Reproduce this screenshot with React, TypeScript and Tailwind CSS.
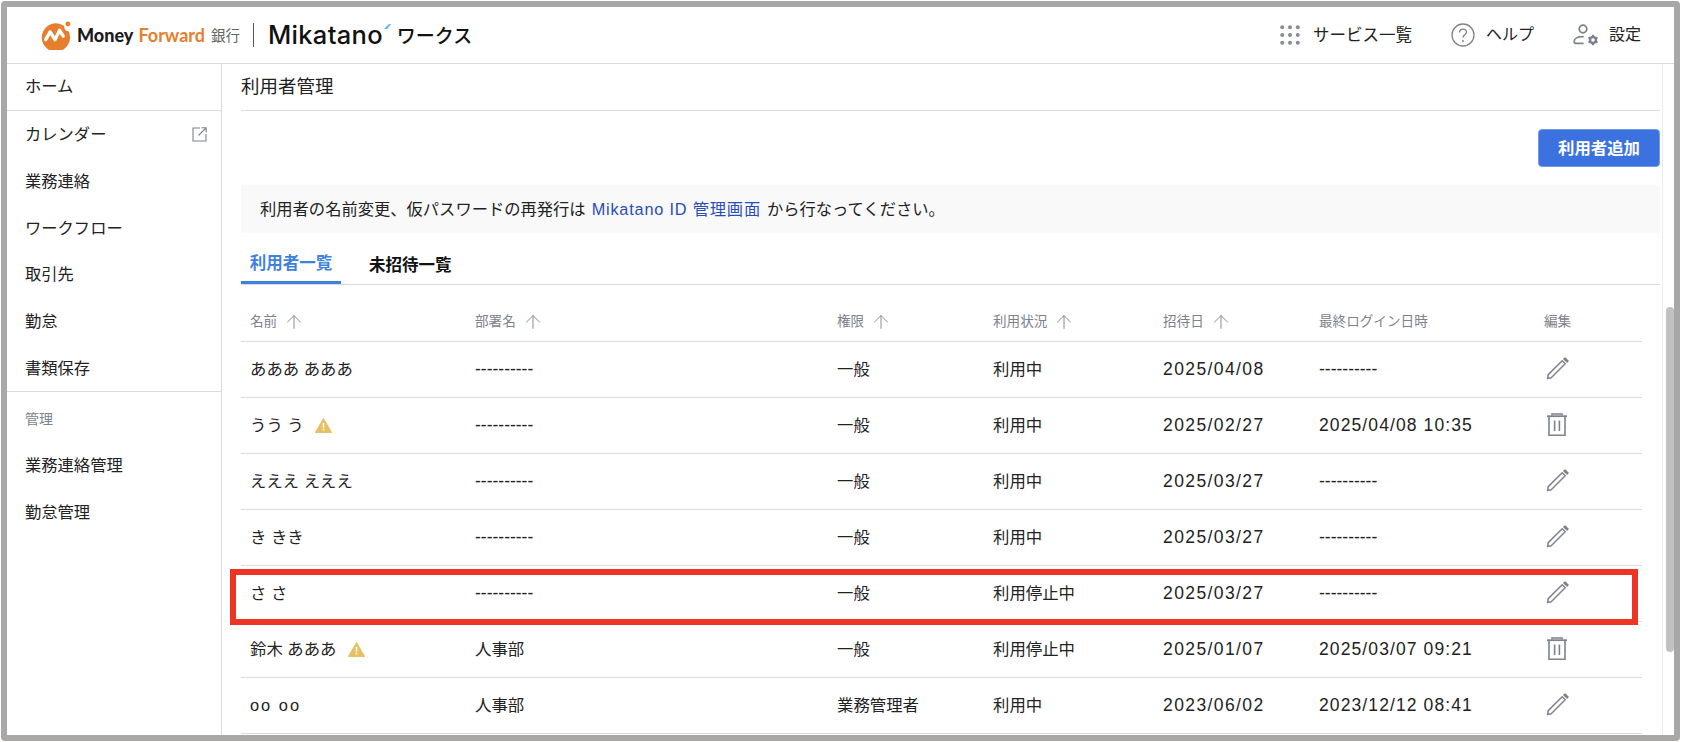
import React from "react";
import { ArrowUp } from "lucide-react";

const jp = "font-['Liberation_Sans','Noto_Sans_CJK_JP',sans-serif]";

const menu = ["カレンダー", "業務連絡", "ワークフロー", "取引先", "勤怠", "書類保存"];
const adminMenu = ["業務連絡管理", "勤怠管理"];

const columns = [
  { label: "名前", sort: true },
  { label: "部署名", sort: true },
  { label: "権限", sort: true },
  { label: "利用状況", sort: true },
  { label: "招待日", sort: true },
  { label: "最終ログイン日時", sort: false },
  { label: "編集", sort: false },
];

const none = "----------";

const users = [
  { name: "あああ あああ", warn: false, dept: none, role: "一般", status: "利用中", invited: "2025/04/08", login: none, trash: false },
  { name: "うう う", warn: true, dept: none, role: "一般", status: "利用中", invited: "2025/02/27", login: "2025/04/08 10:35", trash: true },
  { name: "えええ えええ", warn: false, dept: none, role: "一般", status: "利用中", invited: "2025/03/27", login: none, trash: false },
  { name: "き きき", warn: false, dept: none, role: "一般", status: "利用中", invited: "2025/03/27", login: none, trash: false },
  { name: "さ さ", warn: false, dept: none, role: "一般", status: "利用停止中", invited: "2025/03/27", login: none, trash: false },
  { name: "鈴木 あああ", warn: true, dept: "人事部", role: "一般", status: "利用停止中", invited: "2025/01/07", login: "2025/03/07 09:21", trash: true },
  { name: "oo oo", warn: false, dept: "人事部", role: "業務管理者", status: "利用中", invited: "2023/06/02", login: "2023/12/12 08:41", trash: false },
];

const PencilIcon = () => (
  <svg width="24" height="24" viewBox="0 0 24 24" fill="none" stroke="#7d828b" strokeWidth="1.5" strokeLinejoin="round">
    <path d="M3.200 17.600 17.200 3.800l3 3L6.200 20.700l-3.600.8z" />
    <path d="M19 1.900l1-.9 3 3-1 1z" fill="#7d828b" />
  </svg>
);

const TrashIcon = () => (
  <svg width="22" height="24" viewBox="0 0 22 24" fill="none" stroke="#7d828b" strokeWidth="1.6" className="ml-px">
    <path d="M1 3.200h20" strokeWidth="1.800" />
    <path d="M6 2.200V1h10v1.200" />
    <path d="M3 3.200V22.200h16V3.200" />
    <path d="M8.600 7.500v10.500M13.400 7.500v10.500" />
  </svg>
);

const WarnIcon = () => (
  <svg width="17" height="15" viewBox="0 0 17 15">
    <path d="M8.500.6 16.700 14.600H.3z" fill="#e8c064" stroke="#e8c064" strokeLinejoin="round" />
    <rect x="7.700" y="5" width="1.600" height="4.600" fill="#fff" />
    <rect x="7.700" y="10.800" width="1.600" height="1.600" fill="#fff" />
  </svg>
);

const DotsIcon = () => (
  <svg width="20" height="20" viewBox="0 0 20 20" fill="#868b94">
    {[2.2, 10, 17.8].map((cy) =>
      [2.2, 10, 17.8].map((cx) => <circle key={`${cx}-${cy}`} cx={cx} cy={cy} r="2" />)
    )}
  </svg>
);

const HelpIcon = () => (
  <svg width="24" height="24" viewBox="0 0 24 24" fill="none" stroke="#7d828b">
    <circle cx="12" cy="12" r="11" strokeWidth="1.300" />
    <path d="M8.600 9.400c0-2 1.500-3.200 3.400-3.200s3.400 1.200 3.400 3c0 2.600-3.400 2.600-3.400 5.400" strokeWidth="1.300" />
    <circle cx="12" cy="18" r="0.9" fill="#7d828b" stroke="none" />
  </svg>
);

const UserGearIcon = () => (
  <svg width="26" height="22" viewBox="0 0 26 22" fill="none" stroke="#7d828b" strokeWidth="1.700">
    <circle cx="10" cy="5" r="3.800" />
    <path d="M10 12.600c-5.200 0-8.800 1.900-8.800 4.600v.6c0 1 .8 1.600 1.700 1.600h7" strokeLinecap="round" />
    <circle cx="20" cy="16" r="3" strokeWidth="2.400" />
    <path d="M20 10.800v2M20 19.200v2M15.500 13.400l1.700 1M22.800 17.600l1.700 1M15.500 18.600l1.700-1M22.800 14.400l1.700-1" strokeWidth="2.200" />
  </svg>
);

const ExternalIcon = () => (
  <svg width="15" height="15" viewBox="0 0 15 15" fill="none" stroke="#7d828b" strokeWidth="1.100">
    <path d="M8 1H1v13h13V7" />
    <path d="M6.500 8.500 14 1M9.500 .8h4.700v4.700" />
  </svg>
);

const Logo = () => (
  <svg width="31" height="30" viewBox="0 0 30 29">
    <path d="M23.500 5.800A13.700 13.700 0 1 0 27.800 11 5 5 0 0 1 23.500 5.800z" fill="#e67f2d" />
    <circle cx="27" cy="3.800" r="2.400" fill="#e67f2d" />
    <path d="M5.500 19 9.800 11.500l4.700 7.500 4.500-9 3.500 5.500" fill="none" stroke="#fff" strokeWidth="3.200" strokeLinecap="round" strokeLinejoin="round" />
  </svg>
);

function Header() {
  return (
    <header className="flex h-[57px] shrink-0 items-center justify-between border-b border-[#dcdcdc] pl-[33px] pr-[33px]">
      <div className="flex items-center">
        <Logo />
        <span className="ml-[6px] font-['Lato',sans-serif] text-[18px] leading-none font-black text-[#1c1c1c]">Money</span>
        <span className="ml-[5px] font-['Lato',sans-serif] text-[18px] leading-none font-bold text-[#e67f2d]">Forward</span>
        <span className="ml-[6px] font-['Noto_Sans_CJK_JP',sans-serif] text-[14.500px] text-[#666]">銀行</span>
        <span className="ml-[13px] h-[24px] w-px bg-[#555]" />
        <span className="ml-[14px] font-['Inter',sans-serif] text-[25.500px] leading-none font-medium tracking-[0.3px] text-[#111]">Mikatano</span>
        <svg className="mb-[16px] ml-px" width="7" height="6" viewBox="0 0 7 6">
          <path d="M0 5 5 0h2L3 5z" fill="#4fb4ee" />
        </svg>
        <span className="ml-[6px] font-['Noto_Sans_CJK_JP',sans-serif] text-[19px] font-medium text-[#111]">ワークス</span>
      </div>
      <nav className="flex items-center text-[16px] text-[#222]">
        <DotsIcon />
        <span className="ml-[13px] text-[16.500px]">サービス一覧</span>
        <span className="ml-[39px]"><HelpIcon /></span>
        <span className="ml-[11px]">ヘルプ</span>
        <span className="ml-[39px]"><UserGearIcon /></span>
        <span className="ml-[10px]">設定</span>
      </nav>
    </header>
  );
}

function Sidebar() {
  return (
    <aside className="w-[215px] shrink-0 border-r border-[#dcdcdc] text-[16.300px] text-[#222]">
      <div className="flex h-[47px] items-center border-b border-[#dcdcdc] pb-px pl-[18px]">ホーム</div>
      <ul className="border-b border-[#dcdcdc]">
        {menu.map((item, i) => (
          <li key={item} className="flex h-[46.700px] items-center justify-between pl-[18px] pr-[14px]">
            {item}
            {i === 0 && <ExternalIcon />}
          </li>
        ))}
      </ul>
      <div className="flex h-[54px] items-center pl-[18px] text-[14px] text-[#7d828b]">管理</div>
      <ul className="-mt-[4px]">
        {adminMenu.map((item) => (
          <li key={item} className="flex h-[46.700px] items-center pl-[18px]">
            {item}
          </li>
        ))}
      </ul>
    </aside>
  );
}

function UserTable() {
  return (
    <table className="mt-[12px] w-[1401px] table-fixed border-collapse">
      <colgroup>
        <col className="w-[225px]" />
        <col className="w-[362px]" />
        <col className="w-[156px]" />
        <col className="w-[170px]" />
        <col className="w-[156px]" />
        <col className="w-[225px]" />
        <col className="w-[107px]" />
      </colgroup>
      <thead>
        <tr className="h-[44px] border-b border-[#dcdcdc]">
          {columns.map((col) => (
            <th key={col.label} className="pl-[9px] pt-[7px] text-left text-[13.600px] font-normal text-[#7d828b]">
              <span className="flex items-center">
                {col.label}
                {col.sort && <ArrowUp className="ml-[6px]" size={22} strokeWidth={1} />}
              </span>
            </th>
          ))}
        </tr>
      </thead>
      <tbody className="text-[16.400px] text-[#222]">
        {users.map((user) => (
          <tr key={user.name} className="h-[56px] border-b border-[#dcdcdc]">
            <td className="pl-[9px] pt-[1px]">
              <span className={`flex items-center ${user.name === "oo oo" ? "tracking-[2px]" : ""}`}>
                {user.name}
                {user.warn && <span className="ml-[11px]"><WarnIcon /></span>}
              </span>
            </td>
            <td className={`pl-[9px] pt-[1px] ${user.dept === none ? "text-[17.500px]" : ""}`}>{user.dept}</td>
            <td className="pl-[9px] pt-[1px]">{user.role}</td>
            <td className="pl-[9px] pt-[1px]">{user.status}</td>
            <td className="pl-[9px] pt-[1px] text-[17.500px] tracking-[1.400px]">{user.invited}</td>
            <td className={`pl-[9px] pt-[1px] text-[17.500px] ${user.login === none ? "" : "tracking-[1.100px]"}`}>{user.login}</td>
            <td className="pl-[10px]">
              <span className="flex items-center">{user.trash ? <TrashIcon /> : <PencilIcon />}</span>
            </td>
          </tr>
        ))}
      </tbody>
    </table>
  );
}

export default function App() {
  return (
    <div className={`h-[742px] w-[1682px] overflow-hidden bg-white p-px ${jp}`}>
      <div className="relative flex h-[740px] w-[1679px] flex-col overflow-hidden rounded-[4px] border-[6px] border-[#a9a8a6] bg-white">
        <Header />
        <div className="flex min-h-0 flex-1">
          <Sidebar />
          <main className="min-w-0 flex-1 overflow-hidden pl-[19px] pr-[2px]">
            <div className="flex h-[47px] w-[1419px] items-center border-b border-[#dcdcdc] text-[18.500px] text-[#222]">利用者管理</div>
            <div className="mt-[18px] flex w-[1419px] justify-end">
              <button className="h-[38px] w-[122px] rounded-[4px] border border-[#6f9be8] bg-[#3b72e0] text-[16.400px] font-bold text-white">利用者追加</button>
            </div>
            <p className="mt-[18px] flex h-[48px] w-[1419px] items-center bg-[#f9f9f9] pl-[19px] text-[16.300px] text-[#222]">
              利用者の名前変更、仮パスワードの再発行は
              <span className="mx-[6px] tracking-[0.8px] text-[#2a4db5]">Mikatano ID 管理画面</span>
              から行なってください。
            </p>
            <div className="mt-[8px] flex h-[44px] w-[1419px] items-end border-b border-[#dcdcdc] text-[16.500px] font-bold">
              <span className="flex h-[44px] w-[100px] items-center justify-center border-b-[3px] border-[#3f82dc] pt-[6px] text-[#3f82dc]">利用者一覧</span>
              <span className="ml-[28px] flex h-[44px] items-center pt-[6px] text-[#111]">未招待一覧</span>
            </div>
            <UserTable />
          </main>
          <div className="w-[12px] shrink-0 border-l border-[#ececec] pl-[3px] pt-[243px]">
            <div className="h-[345px] w-[8px] rounded-t-[4px] rounded-b-[4px] bg-[#c1c1c1]" />
          </div>
        </div>
        <div className="absolute top-[562px] left-[223px] h-[56px] w-[1408px] border-[6px] border-[#ee3524]" />
      </div>
    </div>
  );
}
